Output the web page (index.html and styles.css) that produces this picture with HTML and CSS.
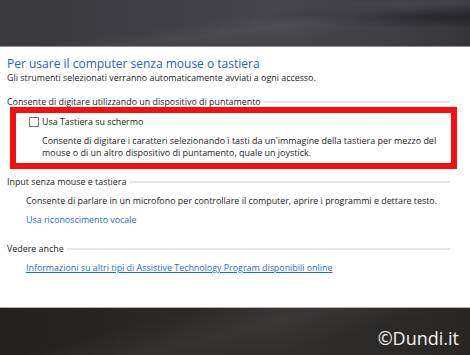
FILE: index.html
```html
<!DOCTYPE html>
<html lang="it">
<head>
<meta charset="utf-8">
<link rel="stylesheet" href="styles.css">
</head>
<body>
<div class="page">
  <div class="band band-top"></div>
  <div class="panel">
    <h1 class="title">Per usare il computer senza mouse o tastiera</h1>
    <p class="subtitle">Gli strumenti selezionati verranno automaticamente avviati a ogni accesso.</p>

    <div class="group-head"><span>Consente di digitare utilizzando un dispositivo di puntamento</span><i class="rule"></i></div>
    <div class="highlight">
      <label class="check-row"><span class="checkbox"></span><span>Usa Tastiera su schermo</span></label>
      <p class="desc">Consente di digitare i caratteri selezionando i tasti da un'immagine della tastiera per mezzo del<br>mouse o di un altro dispositivo di puntamento, quale un joystick.</p>
    </div>

    <div class="group-head g2"><span>Input senza mouse e tastiera</span><i class="rule"></i></div>
    <p class="item">Consente di parlare in un microfono per controllare il computer, aprire i programmi e dettare testo.</p>
    <a class="item link">Usa riconoscimento vocale</a>

    <div class="group-head g3"><span>Vedere anche</span><i class="rule"></i></div>
    <a class="item link underline">Informazioni su altri tipi di Assistive Technology Program disponibili online</a>
  </div>
  <div class="band band-bottom"><span class="brand">©Dundi.it</span></div>
</div>
</body>
</html>
```
FILE: styles.css
```css
html, body {
  margin: 0;
  padding: 0;
  background: #ffffff;
}
.page {
  width: 470px;
  height: 355px;
  display: flex;
  flex-direction: column;
  font-family: "Open Sans", "Noto Sans", sans-serif;
  color: #1b1b1b;
  overflow: hidden;
}
.band {
  flex: none;
}
.band-top {
  height: 46px;
  border-bottom: 1px solid #8e8e92;
  background:
    linear-gradient(172deg, rgba(255,255,255,0) 45%, rgba(110,112,125,0.18) 58%, rgba(255,255,255,0) 72%),
    radial-gradient(ellipse at 90% 35%, rgba(20,20,25,0.55), rgba(0,0,0,0) 28%),
    linear-gradient(90deg, #39383c 0%, #403f45 35%, #46454c 60%, #3f3e43 85%, #353438 100%);
}
.band-bottom {
  height: 47px;
  border-top: 1px solid #b4b4b4;
  background:
    linear-gradient(165deg, rgba(255,255,255,0) 30%, rgba(90,90,90,0.2) 50%, rgba(255,255,255,0) 70%),
    linear-gradient(90deg, #232120 0%, #2b2928 40%, #312f2e 60%, #282625 100%);
  display: flex;
  align-items: center;
  justify-content: flex-end;
  padding-right: 11px;
}
.brand {
  color: #f2f2f2;
  font-family: "Open Sans", sans-serif;
  font-size: 18px;
  margin-top: 12px;
}
.panel {
  flex: 1;
  padding: 9px 20px 0 7px;
  display: flex;
  flex-direction: column;
  align-items: flex-start;
  font-size: 8.9px;
  line-height: 11px;
  white-space: nowrap;
}
.title {
  margin: 0;
  font-weight: normal;
  font-size: 12px;
  line-height: 16px;
  color: #1e62c4;
}
.subtitle {
  margin: 0;
}
.group-head {
  align-self: stretch;
  display: flex;
  align-items: center;
  margin-top: 13px;
}
.group-head .rule {
  flex: 1;
  height: 2px;
  background: #e6e6e6;
  margin-left: 3px;
}
.g2 { margin-top: 7px; }
.g3 { margin-top: 18px; }
.highlight {
  align-self: stretch;
  margin: 0 -7px 0 3px;
  border: 6px solid #f90d0d;
  padding: 3px 0 4px 13px;
}
.check-row {
  display: flex;
  align-items: center;
  gap: 3px;
}
.checkbox {
  width: 8px;
  height: 8px;
  border: 1px solid #7a7a7a;
  background: #fff;
}
.desc {
  margin: 8px 0 0 13px;
  font-size: 8.95px;
  line-height: 12px;
}
.item {
  margin: 8px 0 0 19px;
}
.link {
  color: #1a6ed0;
  display: block;
}
.underline {
  text-decoration: underline;
}
```
